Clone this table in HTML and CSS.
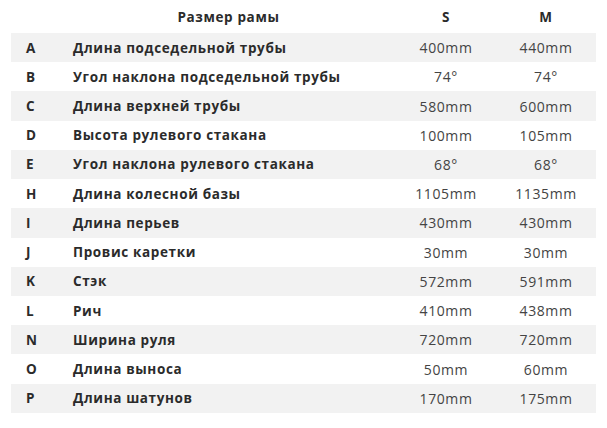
FILE: index.html
```html
<!DOCTYPE html>
<html lang="ru">
<head>
<meta charset="utf-8">
<link rel="stylesheet" href="styles.css">
</head>
<body>
<table class="geo">
  <thead>
    <tr>
      <th class="c-letter"></th>
      <th class="c-name">Размер рамы</th>
      <th class="c-val">S</th>
      <th class="c-val">M</th>
    </tr>
  </thead>
  <tbody>
    <tr><td class="c-letter">A</td><td class="c-name">Длина подседельной трубы</td><td class="c-val">400mm</td><td class="c-val">440mm</td></tr>
    <tr><td class="c-letter">B</td><td class="c-name">Угол наклона подседельной трубы</td><td class="c-val">74°</td><td class="c-val">74°</td></tr>
    <tr><td class="c-letter">C</td><td class="c-name">Длина верхней трубы</td><td class="c-val">580mm</td><td class="c-val">600mm</td></tr>
    <tr><td class="c-letter">D</td><td class="c-name">Высота рулевого стакана</td><td class="c-val">100mm</td><td class="c-val">105mm</td></tr>
    <tr><td class="c-letter">E</td><td class="c-name">Угол наклона рулевого стакана</td><td class="c-val">68°</td><td class="c-val">68°</td></tr>
    <tr><td class="c-letter">H</td><td class="c-name">Длина колесной базы</td><td class="c-val">1105mm</td><td class="c-val">1135mm</td></tr>
    <tr><td class="c-letter">I</td><td class="c-name">Длина перьев</td><td class="c-val">430mm</td><td class="c-val">430mm</td></tr>
    <tr><td class="c-letter">J</td><td class="c-name">Провис каретки</td><td class="c-val">30mm</td><td class="c-val">30mm</td></tr>
    <tr><td class="c-letter">K</td><td class="c-name">Стэк</td><td class="c-val">572mm</td><td class="c-val">591mm</td></tr>
    <tr><td class="c-letter">L</td><td class="c-name">Рич</td><td class="c-val">410mm</td><td class="c-val">438mm</td></tr>
    <tr><td class="c-letter">N</td><td class="c-name">Ширина руля</td><td class="c-val">720mm</td><td class="c-val">720mm</td></tr>
    <tr><td class="c-letter">O</td><td class="c-name">Длина выноса</td><td class="c-val">50mm</td><td class="c-val">60mm</td></tr>
    <tr><td class="c-letter">P</td><td class="c-name">Длина шатунов</td><td class="c-val">170mm</td><td class="c-val">175mm</td></tr>
  </tbody>
</table>
</body>
</html>
```
FILE: styles.css
```css
html, body {
  margin: 0;
  padding: 0;
  background: #ffffff;
}
body {
  padding: 0 11px;
  font-family: "Open Sans", "DejaVu Sans", sans-serif;
  color: #333333;
}
.geo {
  width: 585px;
  border-collapse: collapse;
  table-layout: fixed;
}
.geo th, .geo td {
  padding: 0;
  height: 29.23px;
  font-size: 13.5px;
  letter-spacing: 0.63px;
  white-space: nowrap;
}
.geo thead th {
  height: 33px;
  font-weight: 700;
  color: #2b2b2b;
}
.geo tbody tr:nth-child(odd) {
  background: #f2f2f2;
}
.c-letter {
  width: 50px;
  text-align: left;
  padding-left: 15px !important;
  box-sizing: border-box;
  font-weight: 700;
  color: #2b2b2b;
}
.c-name {
  width: 335px;
  text-align: left;
}
.geo td.c-name {
  padding-left: 12px;
  font-weight: 700;
  color: #2b2b2b;
}
.geo th.c-name {
  text-align: center;
}
.c-val {
  width: 100px;
  text-align: center;
}
.geo td.c-val {
  font-size: 14px;
  letter-spacing: 0.6px;
  font-weight: 400;
  color: #444444;
}
```
